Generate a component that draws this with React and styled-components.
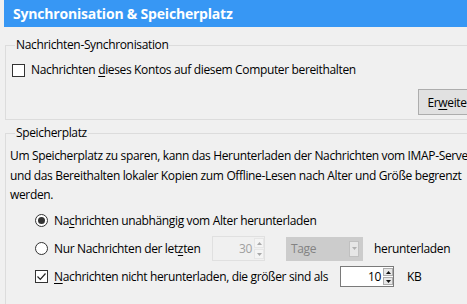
import React from "react";
import styled, { createGlobalStyle } from "styled-components";

const GlobalStyle = createGlobalStyle`
    html, body {
        margin: 0;
        background: #f0f0f0;
        overflow: hidden;
    }
    body {
        font-family: "Open Sans", "Noto Sans", sans-serif;
        font-size: 12px;
        letter-spacing: -0.35px;
        color: #000;
    }
`;

const Page = styled.div`
    width: 500px;
`;
const Header = styled.div`
    height: 27px;
    margin-left: 4px;
    padding-left: 9px;
    display: flex;
    align-items: center;
    background: #3797f4;
    color: #fff;
    font-weight: bold;
    font-size: 14px;
    letter-spacing: -0.2px;
`;
const Content = styled.div`
    padding-left: 5px;
`;
const GroupBox = styled.fieldset`
    margin: ${(p) => p.$top}px 0 0;
    padding: 0 6px ${(p) => p.$bottom}px;
    border: 1px solid #dcdcdc;
    min-width: 0;
`;
const Legend = styled.legend`
    margin-left: 3px;
    padding: 0 1px;
    line-height: 16px;
`;
const Row = styled.div`
    display: flex;
    align-items: center;
    height: ${(p) => p.$h || 16}px;
    margin-top: ${(p) => p.$mt || 0}px;
    padding-left: ${(p) => p.$indent || 0}px;
`;
const Label = styled.span`
    margin-left: 6px;
    line-height: 16px;
    white-space: nowrap;
    width: ${(p) => (p.$w ? `${p.$w}px` : "auto")};
    color: ${(p) => (p.$disabled ? "#a0a0a0" : "#000")};
`;
const Key = styled.u`
    text-decoration-thickness: 1px;
    text-underline-offset: 2px;
`;
const Box = styled.span`
    width: 13px;
    height: 13px;
    box-sizing: border-box;
    border: 1px solid #333;
    background: #fff;
    display: inline-flex;
    align-items: center;
    justify-content: center;
    flex: none;
`;
const Radio = styled(Box)`
    border-radius: 50%;
`;
const Dot = styled.span`
    width: 7px;
    height: 7px;
    border-radius: 50%;
    background: #333;
`;
const ButtonRow = styled.div`
    display: flex;
    justify-content: flex-end;
    margin-top: 11px;
`;
const Button = styled.div`
    width: 75px;
    height: 26px;
    box-sizing: border-box;
    border: 1px solid #adadad;
    background: #e1e1e1;
    display: flex;
    align-items: center;
    justify-content: center;
`;
const Text = styled.p`
    margin: 5px 0 0 -2px;
    line-height: 19.5px;
    white-space: nowrap;
`;
const Spin = styled.div`
    display: flex;
    align-items: stretch;
    width: ${(p) => p.$w}px;
    height: ${(p) => p.$h}px;
    box-sizing: border-box;
    border: 1px solid ${(p) => (p.$disabled ? "#e0e0e0" : "#7a7a7a")};
    background: ${(p) => (p.$disabled ? "#f0f0f0" : "#fff")};
    margin-left: ${(p) => p.$ml || 0}px;
`;
const SpinValue = styled.span`
    flex: 1;
    display: flex;
    align-items: center;
    justify-content: flex-end;
    padding-right: 2px;
    color: ${(p) => (p.$disabled ? "#a0a0a0" : "#000")};
`;
const SpinButtons = styled.div`
    width: 10px;
    display: flex;
    flex-direction: column;
    gap: 1px;
    padding: 1px 0;
`;
const Arrow = styled.div`
    flex: 1;
    display: flex;
    align-items: center;
    justify-content: center;
    box-sizing: border-box;
    border: 1px solid ${(p) => (p.$disabled ? "#e6e6e6" : "#adadad")};
    background: ${(p) => (p.$disabled ? "#f4f4f4" : "#e8e8e8")};
`;
const Select = styled.div`
    margin-left: 21px;
    width: 77px;
    height: 24px;
    box-sizing: border-box;
    background: #cccccc;
    display: flex;
    align-items: center;
    padding: 0 4px 0 5px;
    color: #838383;
`;
const SelectText = styled.span`
    flex: 1;
`;
const SelectButton = styled.span`
    width: 10px;
    height: 16px;
    box-sizing: border-box;
    border: 1px solid #c0c0c0;
    background: #e6e6e6;
    display: flex;
    align-items: center;
    justify-content: center;
`;
const Suffix = styled.span`
    margin-left: ${(p) => p.$ml}px;
    white-space: nowrap;
`;

const Check = () => (
    <Box>
        <svg width="11" height="11" viewBox="0 0 11 11">
            <polyline points="1.5,5.5 4.3,8.3 9.5,2.5" fill="none" stroke="#222" strokeWidth="1.2" />
        </svg>
    </Box>
);

const Tri = ({ up, color }) => (
    <svg width="5" height="3" viewBox="0 0 5 3">
        <polygon points={up ? "0,3 5,3 2.5,0" : "0,0 5,0 2.5,3"} fill={color} />
    </svg>
);

const SpinBox = ({ value, disabled, w, h, ml }) => (
    <Spin $w={w} $h={h} $ml={ml} $disabled={disabled}>
        <SpinValue $disabled={disabled}>{value}</SpinValue>
        <SpinButtons>
            <Arrow $disabled={disabled}><Tri up color={disabled ? "#a8a8a8" : "#111"} /></Arrow>
            <Arrow $disabled={disabled}><Tri color={disabled ? "#a8a8a8" : "#111"} /></Arrow>
        </SpinButtons>
    </Spin>
);

const App = () => {
    return (
        <Page>
            <GlobalStyle />
            <Header>Synchronisation &amp; Speicherplatz</Header>
            <Content>
                <GroupBox $top={10} $bottom={4}>
                    <Legend>Nachrichten-Synchronisation</Legend>
                    <Row $mt={9}>
                        <Box />
                        <Label>Nachrichten <Key>d</Key>ieses Kontos auf diesem Computer bereithalten</Label>
                    </Row>
                    <ButtonRow>
                        <Button>Er<Key>w</Key>eitert...</Button>
                    </ButtonRow>
                </GroupBox>
                <GroupBox $top={5} $bottom={30}>
                    <Legend>Speicherplatz</Legend>
                    <Text>
                        Um Speicherplatz zu sparen, kann das Herunterladen der Nachrichten vom IMAP-Server
                        <br />
                        und das Bereithalten lokaler Kopien zum Offline-Lesen nach Alter und Größe begrenzt
                        <br />
                        werden.
                    </Text>
                    <Row $h={24} $mt={4} $indent={23}>
                        <Radio><Dot /></Radio>
                        <Label>Na<Key>c</Key>hrichten unabhängig vom Alter herunterladen</Label>
                    </Row>
                    <Row $h={24} $mt={4} $indent={23}>
                        <Radio />
                        <Label $w={158}>Nur Nachrichten der let<Key>z</Key>ten</Label>
                        <SpinBox value="30" disabled w={53} h={25} />
                        <Select>
                            <SelectText>Tage</SelectText>
                            <SelectButton><Tri color="#b0b0b0" /></SelectButton>
                        </Select>
                        <Suffix $ml={11}>herunterladen</Suffix>
                    </Row>
                    <Row $h={22} $mt={5} $indent={23}>
                        <Check />
                        <Label $w={286}><Key>N</Key>achrichten nicht herunterladen, die größer sind als</Label>
                        <SpinBox value="10" w={54} h={21} />
                        <Suffix $ml={13}>KB</Suffix>
                    </Row>
                </GroupBox>
            </Content>
        </Page>
    );
};

export default App;
